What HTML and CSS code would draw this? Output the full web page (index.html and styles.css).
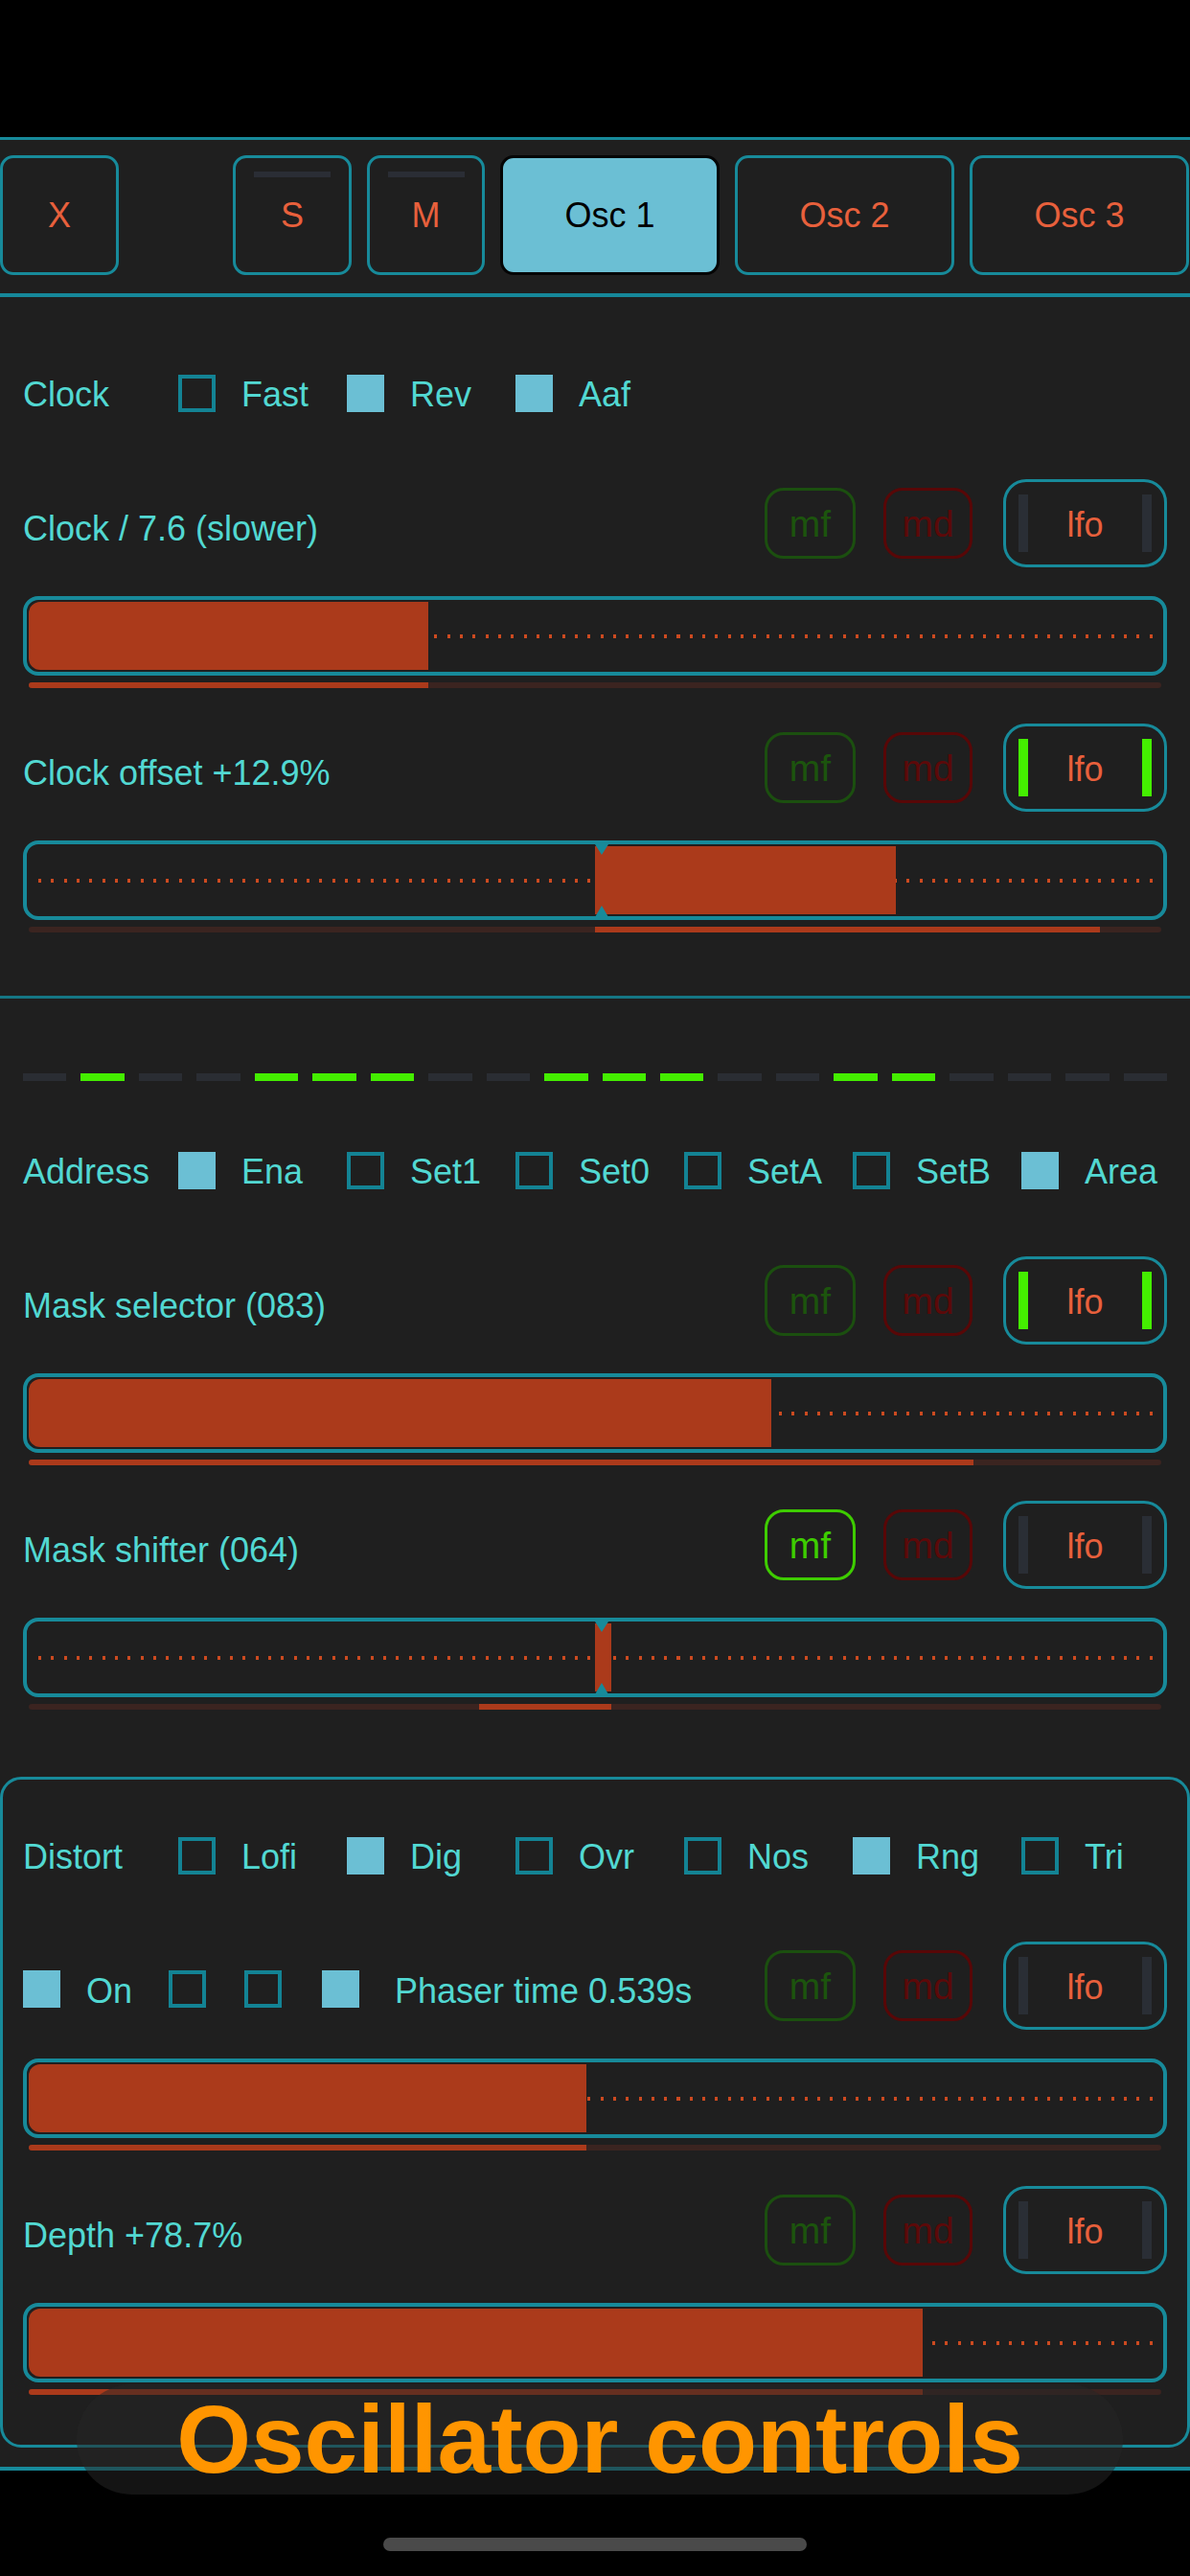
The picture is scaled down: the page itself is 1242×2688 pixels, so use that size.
FILE: index.html
```html
<!DOCTYPE html>
<html>
<head>
<meta charset="utf-8">
<link rel="stylesheet" href="styles.css">
</head>
<body>
<div class="status"></div>
<div class="app">
  <div class="tabs">
    <div class="tab tab-sm">X</div>
    <div class="tab-spacer"></div>
    <div class="tab tab-sm tab-ind">S</div>
    <div class="tab tab-m tab-ind">M</div>
    <div class="tab tab-lg active">Osc 1</div>
    <div class="tab tab-lg">Osc 2</div>
    <div class="tab tab-lg">Osc 3</div>
  </div>

  <section class="sec sec1">
    <div class="cbrow">
      <span class="t">Clock</span>
      <div class="opt"><span class="cb"></span><span class="t">Fast</span></div>
      <div class="opt"><span class="cb on"></span><span class="t">Rev</span></div>
      <div class="opt"><span class="cb on"></span><span class="t">Aaf</span></div>
    </div>

    <div class="ctl">
      <div class="hdr">
        <span class="name">Clock / 7.6 (slower)</span>
        <span class="mf">mf</span><span class="md">md</span>
        <span class="lfo"><i class="bar"></i><b>lfo</b><i class="bar"></i></span>
      </div>
      <div class="slider"><div class="fill" style="width:35.3%"></div></div>
      <div class="ubar"><div class="ufill" style="width:35.3%"></div></div>
    </div>

    <div class="ctl">
      <div class="hdr">
        <span class="name">Clock offset +12.9%</span>
        <span class="mf">mf</span><span class="md">md</span>
        <span class="lfo"><i class="bar on"></i><b>lfo</b><i class="bar on"></i></span>
      </div>
      <div class="slider bi"><span class="tri-top"></span><span class="tri-bot"></span><div class="fill" style="margin-left:50%;width:26.6%"></div></div>
      <div class="ubar"><div class="ufill" style="margin-left:50%;width:44.6%"></div></div>
    </div>
  </section>

  <section class="sec sec2">
    <div class="steps">
      <i class="seg"></i><i class="seg on"></i><i class="seg"></i><i class="seg"></i><i class="seg on"></i>
      <i class="seg on"></i><i class="seg on"></i><i class="seg"></i><i class="seg"></i><i class="seg on"></i>
      <i class="seg on"></i><i class="seg on"></i><i class="seg"></i><i class="seg"></i><i class="seg on"></i>
      <i class="seg on"></i><i class="seg"></i><i class="seg"></i><i class="seg"></i><i class="seg"></i>
    </div>

    <div class="cbrow">
      <span class="t">Address</span>
      <div class="opt"><span class="cb on"></span><span class="t">Ena</span></div>
      <div class="opt"><span class="cb"></span><span class="t">Set1</span></div>
      <div class="opt"><span class="cb"></span><span class="t">Set0</span></div>
      <div class="opt"><span class="cb"></span><span class="t">SetA</span></div>
      <div class="opt"><span class="cb"></span><span class="t">SetB</span></div>
      <div class="opt"><span class="cb on"></span><span class="t">Area</span></div>
    </div>

    <div class="ctl">
      <div class="hdr">
        <span class="name">Mask selector (083)</span>
        <span class="mf">mf</span><span class="md">md</span>
        <span class="lfo"><i class="bar on"></i><b>lfo</b><i class="bar on"></i></span>
      </div>
      <div class="slider"><div class="fill" style="width:65.6%"></div></div>
      <div class="ubar"><div class="ufill" style="width:83.4%"></div></div>
    </div>

    <div class="ctl">
      <div class="hdr">
        <span class="name">Mask shifter (064)</span>
        <span class="mf on">mf</span><span class="md">md</span>
        <span class="lfo"><i class="bar"></i><b>lfo</b><i class="bar"></i></span>
      </div>
      <div class="slider bi"><span class="tri-top"></span><span class="tri-bot"></span><div class="fill" style="margin-left:50%;width:1.45%"></div></div>
      <div class="ubar"><div class="ufill" style="margin-left:39.8%;width:11.6%"></div></div>
    </div>
  </section>

  <section class="box">
    <div class="cbrow">
      <span class="t">Distort</span>
      <div class="opt"><span class="cb"></span><span class="t">Lofi</span></div>
      <div class="opt"><span class="cb on"></span><span class="t">Dig</span></div>
      <div class="opt"><span class="cb"></span><span class="t">Ovr</span></div>
      <div class="opt"><span class="cb"></span><span class="t">Nos</span></div>
      <div class="opt"><span class="cb on"></span><span class="t">Rng</span></div>
      <div class="opt"><span class="cb"></span><span class="t">Tri</span></div>
    </div>

    <div class="ctl">
      <div class="hdr">
        <div class="left">
          <span class="cb on"></span>
          <span class="t on-t">On</span>
          <span class="cb g1"></span>
          <span class="cb g2"></span>
          <span class="cb on g3"></span>
          <span class="t g4">Phaser time 0.539s</span>
        </div>
        <span class="mf">mf</span><span class="md">md</span>
        <span class="lfo"><i class="bar"></i><b>lfo</b><i class="bar"></i></span>
      </div>
      <div class="slider"><div class="fill" style="width:49.2%"></div></div>
      <div class="ubar"><div class="ufill" style="width:49.2%"></div></div>
    </div>

    <div class="ctl">
      <div class="hdr">
        <span class="name">Depth +78.7%</span>
        <span class="mf">mf</span><span class="md">md</span>
        <span class="lfo"><i class="bar"></i><b>lfo</b><i class="bar"></i></span>
      </div>
      <div class="slider"><div class="fill" style="width:78.9%"></div></div>
      <div class="ubar"><div class="ufill" style="width:78.9%"></div></div>
    </div>
  </section>
</div>
<div class="home"><div class="home-bar"></div></div>
<div class="caption">Oscillator controls</div>
</body>
</html>
```

FILE: styles.css
```css
html, body {
  margin: 0;
  padding: 0;
}
body {
  width: 1242px;
  height: 2688px;
  background: #000;
  overflow: hidden;
  position: relative;
  font-family: "Liberation Sans", Arial, sans-serif;
  font-size: 36px;
  color: #52d8d2;
}
.status {
  height: 143px;
}
.app {
  background: #1f1f1f;
  border-top: 3px solid #178a9a;
  border-bottom: 4px solid #178a9a;
}

/* tabs */
.tabs {
  display: flex;
  gap: 16px;
  padding: 16px 0 19px;
  border-bottom: 4px solid #16889a;
}
.tab {
  position: relative;
  box-sizing: border-box;
  height: 125px;
  border: 3px solid #178a9a;
  border-radius: 14px;
  display: flex;
  align-items: center;
  justify-content: center;
  color: #e8603c;
  font-size: 36px;
}
.tab-sm { width: 124px; }
.tab-m { width: 123px; }
.tab-lg { width: 229px; }
.tab-spacer { width: 87px; }
.tab.active {
  background: #6bbfd4;
  border-color: #050505;
  color: #000;
}
.tab-ind::before {
  content: "";
  position: absolute;
  top: 14px;
  left: 50%;
  width: 80px;
  margin-left: -40px;
  height: 6px;
  background: #2a2d35;
}

/* sections */
.sec1 {
  padding: 77px 24px 66px;
  border-bottom: 3px solid #157684;
}
.sec2 {
  padding: 78px 24px 0;
}
.box {
  margin: 70px 0 20px;
  border: 3px solid #178a9a;
  border-radius: 22px;
  padding: 56px 21px 52px;
}

/* checkbox rows */
.cbrow {
  display: grid;
  grid-template-columns: 162px repeat(5, 176px) 1fr;
  align-items: center;
  height: 40px;
}
.opt {
  display: flex;
  align-items: center;
  gap: 27px;
}
.t {
  padding-top: 4px;
  white-space: nowrap;
}
.cb {
  display: block;
  flex: none;
  width: 39px;
  height: 39px;
  box-sizing: border-box;
  border: 4px solid #138394;
}
.cb.on {
  background: #6bbfd4;
  border-color: #6bbfd4;
}

/* steps */
.steps {
  display: grid;
  grid-template-columns: repeat(20, 1fr);
  column-gap: 15px;
}
.seg {
  display: block;
  height: 8px;
  background: #2a2d33;
}
.seg.on {
  background: #44ee00;
}
.steps + .cbrow {
  margin-top: 70px;
}

/* control blocks */
.ctl {
  margin-top: 37px;
}
.cbrow + .ctl {
  margin-top: 73px;
}
.hdr {
  display: flex;
  align-items: center;
  height: 92px;
}
.name {
  flex: 1;
  margin-top: 12px;
  white-space: nowrap;
}
.left {
  flex: 1;
  display: flex;
  align-items: center;
  margin-top: 6px;
}
.left .t { padding-top: 6px; }
.left .on-t { margin-left: 27px; }
.left .g1 { margin-left: 38px; }
.left .g2 { margin-left: 40px; }
.left .g3 { margin-left: 42px; }
.left .g4 { margin-left: 37px; }

.mf, .md {
  box-sizing: border-box;
  height: 74px;
  border: 3px solid;
  border-radius: 20px;
  display: flex;
  align-items: center;
  justify-content: center;
  font-size: 39px;
  padding-top: 2px;
}
.mf {
  width: 95px;
  margin-right: 29px;
  border-color: #1b4f0f;
  color: #1c540d;
}
.mf.on {
  border-color: #3ecc00;
  color: #3ecc00;
}
.md {
  width: 93px;
  margin-right: 32px;
  border-color: #580707;
  color: #5c0909;
}
.lfo {
  box-sizing: border-box;
  width: 171px;
  height: 92px;
  border: 3px solid #178a9a;
  border-radius: 24px;
  padding: 0 13px;
  display: flex;
  align-items: center;
  justify-content: space-between;
}
.lfo b {
  font-weight: normal;
  color: #e8603c;
  font-size: 36px;
  padding-top: 3px;
}
.bar {
  display: block;
  width: 10px;
  height: 60px;
  background: #2a2e35;
}
.bar.on {
  background: #44ee00;
}

.slider {
  position: relative;
  margin-top: 30px;
  box-sizing: border-box;
  height: 83px;
  border: 4px solid #178a9a;
  border-radius: 16px;
  padding: 2px;
  display: flex;
  background-image: repeating-linear-gradient(to right, #cc4a20 0 3px, transparent 3px 13.33px);
  background-size: 1170px 4px;
  background-position: 12px 50%;
  background-repeat: no-repeat;
}
.fill {
  height: 100%;
  background: #ab3a1b;
  border-radius: 12px 0 0 12px;
}
.slider.bi .fill {
  border-radius: 0;
}
.tri-top, .tri-bot {
  position: absolute;
  left: calc(50% - 0.5px);
  width: 0;
  height: 0;
  border-left: 7.5px solid transparent;
  border-right: 7.5px solid transparent;
  z-index: 1;
}
.tri-top {
  top: 0;
  border-top: 11px solid #178a9a;
}
.tri-bot {
  bottom: -1px;
  border-bottom: 12px solid #178a9a;
}
.ubar {
  margin: 7px 6px 0;
  height: 6px;
  border-radius: 3px;
  background: #3b2420;
  display: flex;
  overflow: hidden;
}
.ufill {
  height: 100%;
  background: #ab3a1b;
}

/* bottom */
.home {
  padding-top: 70px;
}
.home-bar {
  width: 442px;
  height: 14px;
  margin: 0 auto;
  border-radius: 7px;
  background: #4a4a4a;
}
.caption {
  position: absolute;
  top: 2488px;
  left: 80px;
  width: 1092px;
  height: 115px;
  border-radius: 58px;
  background: rgba(38, 38, 38, 0.52);
  display: flex;
  align-items: center;
  justify-content: center;
  font-family: "Liberation Sans", Arial, sans-serif;
  font-weight: bold;
  font-size: 100px;
  color: #ff9500;
  white-space: nowrap;
}
```
